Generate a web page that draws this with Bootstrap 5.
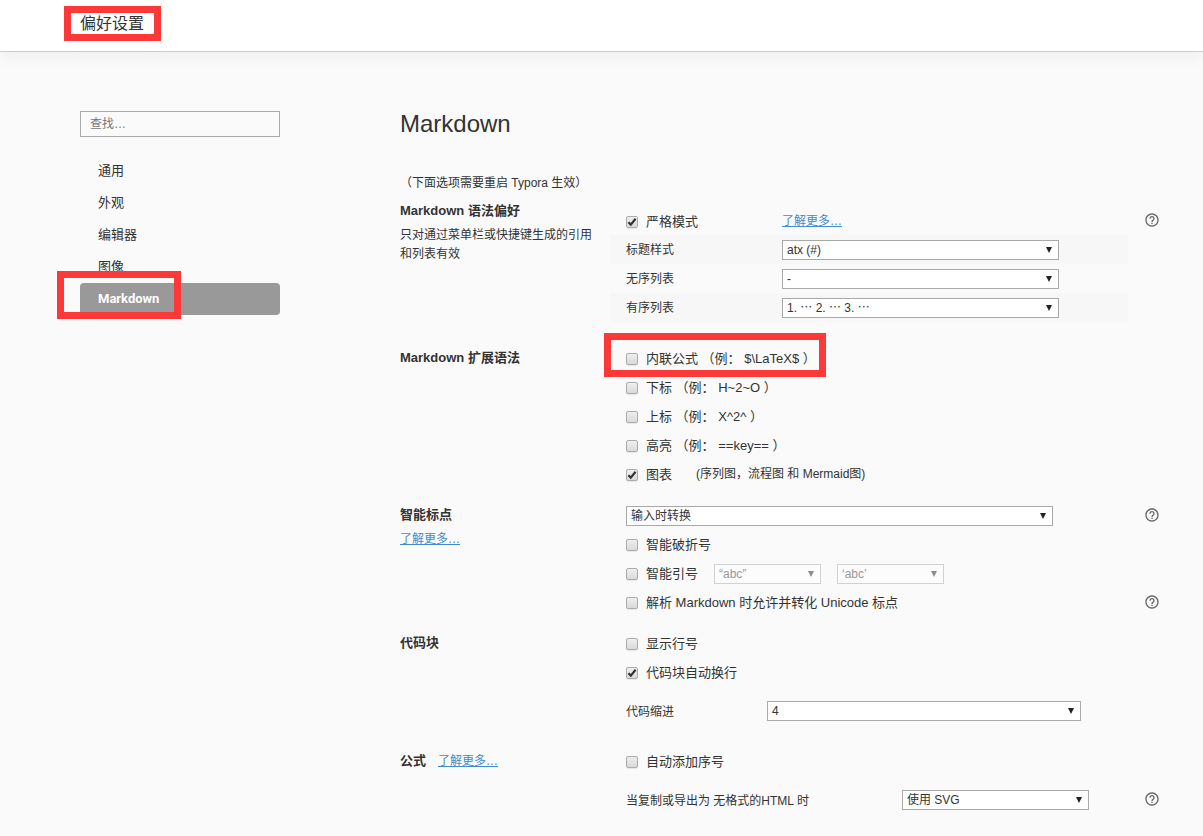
<!DOCTYPE html>
<html lang="zh-CN">
<head>
<meta charset="utf-8">
<meta name="viewport" content="width=device-width, initial-scale=1">
<title>偏好设置</title>
<link href="https://cdn.jsdelivr.net/npm/bootstrap@5.3.0/dist/css/bootstrap.min.css" rel="stylesheet">
<style>
  body { background: #fafafa; color: #333; font-family: "Liberation Sans", "Noto Sans CJK SC", sans-serif; font-size: 12px; line-height: 19px; }
  a { color: #428bca; }
  .topbar { height: 52px; padding: 0 80px; background: #fff; border-bottom: 1px solid #ccc; box-shadow: 0 4px 16px rgba(0,0,0,.05); }
  .topbar h1 { font-size: 16px; line-height: 24px; font-weight: 400; margin: 12px 0 0; }
  .page { padding: 59px 43px 12px 80px; gap: 120px; }
  .sidebar { width: 200px; flex: none; }
  .search { height: 26px; border: 1px solid #a9a9a9; border-radius: 0; background: transparent; font-size: 12px; padding: 0 9px; color: #333; }
  .search::placeholder { color: #777; }
  .side-menu { margin-top: 18px; }
  .side-menu .nav-link { padding: 0 18px; font-size: 13px; line-height: 32px; color: #333; border-radius: 4px; }
  .side-menu .nav-link.active { background: #999; color: #fff; font-weight: 700; font-family: Roboto, "Noto Sans CJK SC", sans-serif; }
  .page-title { font-size: 24px; line-height: 26px; font-weight: 400; margin: 0 0 37px; }
  .notice { margin: 0 0 4px; }
  .group { margin-bottom: 12px; }
  .group-first .group-body { padding: 9px 0 10px; }
  .group-side { width: 210px; flex: none; padding-right: 12px; }
  .group-side h3 { font-size: 13px; line-height: 28px; font-weight: 700; margin: 0 0 1px; }
  .group-side p { margin: 0; }
  .math-link { line-height: 28px; }
  .opt-row { min-height: 29px; }
  .opt-row.tall { min-height: 48px; }
  .opt-main { padding-left: 16px; min-width: 0; }
  .striped { background: #f7f7f7; }
  .check-label { font-size: 13px; }
  .tick { appearance: none; flex: none; width: 12px; height: 12px; margin: 0 8px 0 0; border: 1px solid #acacac; border-radius: 2px; background: linear-gradient(#efefef, #d9d9d9); box-shadow: 0 1px 1px rgba(0,0,0,.08); }
  .tick:checked { background: url("data:image/svg+xml,%3Csvg xmlns='http://www.w3.org/2000/svg' viewBox='0 0 10 10'%3E%3Cpath d='M1.4 5.2 3.8 7.6 8.6 1.8' fill='none' stroke='%23333' stroke-width='2.2'/%3E%3C/svg%3E") center/10px 10px no-repeat, linear-gradient(#efefef, #d9d9d9); }
  .picker { appearance: none; height: 20px; min-width: 0; padding: 0 20px 0 4px; border: 1px solid #a9a9a9; border-radius: 0; color: #333; font-size: 12px; line-height: 18px;
    background: #fff url("data:image/svg+xml,%3Csvg xmlns='http://www.w3.org/2000/svg' viewBox='0 0 6 6'%3E%3Cpath d='M0 0H6L3 6Z' fill='%23222'/%3E%3C/svg%3E") right 6px center/6px 6px no-repeat; }
  .picker:disabled { opacity: .5; color: #333; }
  .picker.quote { width: 107px; }
  .key-style { width: 156px; } .key-indent { width: 141px; } .key-export { width: 276px; }
  .key-style, .key-indent, .key-export, .key-style + a { padding-top: 2px; }
  .end-a { padding-right: 69px; } .end-b { padding-right: 75px; } .end-c { padding-right: 47px; } .end-d { padding-right: 39px; }
  .help { width: 32px; flex: none; border: 0; background: none; padding: 0 0 2px; line-height: 0; text-align: right; color: #666; }
  .help svg { width: 16px; height: 16px; fill: currentColor; }
  /* red highlight frames lying over the page */
  .frame { position: absolute; border: 7px solid #fc3838; pointer-events: none; z-index: 2; }
  .frame-title { inset: -6px -17px -5px -16px; }
  .frame-nav { left: -23px; width: 124px; top: -12px; height: 48px; }
  .frame-math { left: -22px; width: 222px; top: -16px; height: 44px; }
</style>
</head>
<body>
<svg class="d-none" xmlns="http://www.w3.org/2000/svg"><symbol id="q" viewBox="0 0 24 24"><path d="M11 18h2v-2h-2v2zm1-16C6.48 2 2 6.48 2 12s4.480 10 10 10 10-4.480 10-10S17.520 2 12 2zm0 18c-4.410 0-8-3.590-8-8s3.590-8 8-8 8 3.590 8 8-3.590 8-8 8zm0-14c-2.210 0-4 1.790-4 4h2c0-1.100.9-2 2-2s2 .9 2 2c0 2-3 1.750-3 5h2c0-2.250 3-2.500 3-5 0-2.210-1.790-4-4-4z"/></symbol></svg>

<header class="topbar position-relative d-flex align-items-start">
  <h1 class="position-relative">偏好设置<span class="frame frame-title"></span></h1>
</header>

<div class="page d-flex">
  <aside class="sidebar">
    <input class="search w-100 d-block" type="search" placeholder="查找…" aria-label="查找">
    <nav class="side-menu nav flex-column">
      <a class="nav-link" href="#">通用</a>
      <a class="nav-link" href="#">外观</a>
      <a class="nav-link" href="#">编辑器</a>
      <a class="nav-link" href="#">图像</a>
      <a class="nav-link active position-relative" href="#" aria-current="page">Markdown<span class="frame frame-nav"></span></a>
    </nav>
  </aside>

  <main class="flex-grow-1">
    <h2 class="page-title">Markdown</h2>
    <p class="notice">（下面选项需要重启 Typora 生效）</p>

    <section class="group group-first d-flex">
      <div class="group-side"><h3>Markdown 语法偏好</h3><p>只对通过菜单栏或快捷键生成的引用和列表有效</p></div>
      <div class="group-body flex-grow-1">
        <div class="opt-row d-flex"><div class="opt-main flex-grow-1 d-flex align-items-center">
          <div class="key-style flex-shrink-0"><label class="check-label d-flex align-items-center"><input class="tick" type="checkbox" checked>严格模式</label></div>
          <a href="#">了解更多…</a></div>
          <button class="help" type="button" aria-label="帮助"><svg><use href="#q"/></svg></button></div>
        <div class="opt-row d-flex"><div class="opt-main striped flex-grow-1 d-flex align-items-center end-a">
          <label class="key-style flex-shrink-0" for="heading">标题样式</label>
          <select class="picker flex-grow-1" id="heading"><option>atx (#)</option></select></div><span class="help"></span></div>
        <div class="opt-row d-flex"><div class="opt-main flex-grow-1 d-flex align-items-center end-a">
          <label class="key-style flex-shrink-0" for="ul">无序列表</label>
          <select class="picker flex-grow-1" id="ul"><option>-</option></select></div><span class="help"></span></div>
        <div class="opt-row d-flex"><div class="opt-main striped flex-grow-1 d-flex align-items-center end-a">
          <label class="key-style flex-shrink-0" for="ol">有序列表</label>
          <select class="picker flex-grow-1" id="ol"><option>1. ⋯ 2. ⋯ 3. ⋯</option></select></div><span class="help"></span></div>
      </div>
    </section>

    <section class="group d-flex">
      <div class="group-side"><h3>Markdown 扩展语法</h3></div>
      <div class="group-body flex-grow-1">
        <div class="opt-row opt-main d-flex align-items-center"><label class="check-label position-relative d-inline-flex align-items-center"><input class="tick" type="checkbox">内联公式 （例： $\LaTeX$ ）<span class="frame frame-math"></span></label></div>
        <div class="opt-row opt-main d-flex align-items-center"><label class="check-label d-inline-flex align-items-center"><input class="tick" type="checkbox">下标 （例： H~2~O ）</label></div>
        <div class="opt-row opt-main d-flex align-items-center"><label class="check-label d-inline-flex align-items-center"><input class="tick" type="checkbox">上标 （例： X^2^ ）</label></div>
        <div class="opt-row opt-main d-flex align-items-center"><label class="check-label d-inline-flex align-items-center"><input class="tick" type="checkbox">高亮 （例： ==key== ）</label></div>
        <div class="opt-row opt-main d-flex align-items-center gap-4"><label class="check-label d-inline-flex align-items-center"><input class="tick" type="checkbox" checked>图表</label><span>(序列图，流程图 和 Mermaid图)</span></div>
      </div>
    </section>

    <section class="group d-flex">
      <div class="group-side"><h3>智能标点</h3><p><a href="#">了解更多…</a></p></div>
      <div class="group-body flex-grow-1">
        <div class="opt-row d-flex"><div class="opt-main flex-grow-1 d-flex align-items-center end-b">
          <select class="picker flex-grow-1" aria-label="智能标点"><option>输入时转换</option></select></div>
          <button class="help" type="button" aria-label="帮助"><svg><use href="#q"/></svg></button></div>
        <div class="opt-row opt-main d-flex align-items-center"><label class="check-label d-inline-flex align-items-center"><input class="tick" type="checkbox">智能破折号</label></div>
        <div class="opt-row opt-main d-flex align-items-center gap-3"><label class="check-label d-inline-flex align-items-center"><input class="tick" type="checkbox">智能引号</label>
          <select class="picker quote" aria-label="双引号" disabled><option>“abc”</option></select>
          <select class="picker quote" aria-label="单引号" disabled><option>‘abc’</option></select></div>
        <div class="opt-row d-flex"><div class="opt-main flex-grow-1 d-flex align-items-center"><label class="check-label d-inline-flex align-items-center"><input class="tick" type="checkbox">解析 Markdown 时允许并转化 Unicode 标点</label></div>
          <button class="help" type="button" aria-label="帮助"><svg><use href="#q"/></svg></button></div>
      </div>
    </section>

    <section class="group d-flex">
      <div class="group-side"><h3>代码块</h3></div>
      <div class="group-body flex-grow-1">
        <div class="opt-row opt-main d-flex align-items-center"><label class="check-label d-inline-flex align-items-center"><input class="tick" type="checkbox">显示行号</label></div>
        <div class="opt-row opt-main d-flex align-items-center"><label class="check-label d-inline-flex align-items-center"><input class="tick" type="checkbox" checked>代码块自动换行</label></div>
        <div class="opt-row tall d-flex"><div class="opt-main flex-grow-1 d-flex align-items-center end-c">
          <label class="key-indent flex-shrink-0" for="indent">代码缩进</label>
          <select class="picker flex-grow-1" id="indent"><option>4</option></select></div><span class="help"></span></div>
      </div>
    </section>

    <section class="d-flex">
      <div class="group-side d-flex align-items-start"><h3 class="me-2 pe-1">公式</h3><a class="math-link" href="#">了解更多…</a></div>
      <div class="group-body flex-grow-1">
        <div class="opt-row opt-main d-flex align-items-center"><label class="check-label d-inline-flex align-items-center"><input class="tick" type="checkbox">自动添加序号</label></div>
        <div class="opt-row tall d-flex"><div class="opt-main flex-grow-1 d-flex align-items-center end-d">
          <label class="key-export flex-shrink-0" for="export">当复制或导出为 无格式的HTML 时</label>
          <select class="picker flex-grow-1" id="export"><option>使用 SVG</option></select></div>
          <button class="help" type="button" aria-label="帮助"><svg><use href="#q"/></svg></button></div>
      </div>
    </section>
  </main>
</div>
<script src="https://cdn.jsdelivr.net/npm/bootstrap@5.3.0/dist/js/bootstrap.bundle.min.js"></script>
</body>
</html>
